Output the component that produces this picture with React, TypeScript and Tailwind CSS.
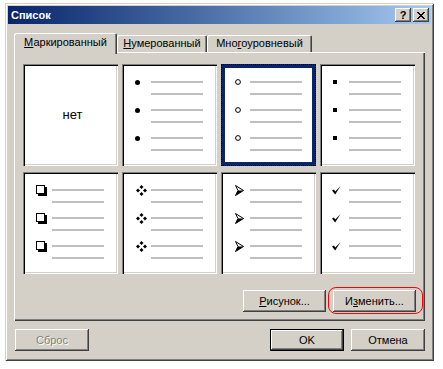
import type { ReactNode } from 'react'

const raised =
    'bg-[#d4d0c8] shadow-[inset_-1px_-1px_#404040,inset_1px_1px_#ffffff,inset_-2px_-2px_#808080,inset_2px_2px_#d4d0c8]'

function Dot() {
    return (
        <svg width="5" height="5" viewBox="0 0 5 5">
            <circle cx="2.5" cy="2.5" r="2.5" fill="#000" />
        </svg>
    )
}

function Ring() {
    return (
        <svg width="6" height="6" viewBox="0 0 6 6">
            <circle cx="3" cy="3" r="2.4" fill="none" stroke="#000" strokeWidth="1" />
        </svg>
    )
}

function Square() {
    return <div className="w-[4px] h-[4px] bg-black" />
}

function Box() {
    return (
        <svg width="11" height="11" viewBox="0 0 11 11" shapeRendering="crispEdges">
            <rect x="0.5" y="0.5" width="8" height="8" fill="#fff" stroke="#000" />
            <rect x="9" y="2" width="2" height="9" fill="#000" />
            <rect x="2" y="9" width="9" height="2" fill="#000" />
        </svg>
    )
}

function Diamonds() {
    const d = (cx: number, cy: number) => `${cx},${cy - 2} ${cx + 2},${cy} ${cx},${cy + 2} ${cx - 2},${cy}`
    return (
        <svg width="11" height="11" viewBox="0 0 11 11">
            <polygon points={d(5.5, 2)} fill="#000" />
            <polygon points={d(2, 5.5)} fill="#000" />
            <polygon points={d(9, 5.5)} fill="#000" />
            <polygon points={d(5.5, 9)} fill="#000" />
        </svg>
    )
}

function Arrow() {
    return (
        <svg width="9" height="11" viewBox="0 0 9 11">
            <path d="M0.5 0.5 L8.5 5.5 L0.5 10.5 L3 5.5 Z" fill="#fff" stroke="#000" strokeWidth="1" />
            <path d="M3 5.5 L8.5 5.5 L0.5 10.5 Z" fill="#000" />
        </svg>
    )
}

function Check() {
    return (
        <svg width="9" height="9" viewBox="0 0 9 9">
            <path d="M0 4.5 L2 3.5 L3.2 5.5 L8.5 0 L3.2 8.5 Z" fill="#000" />
        </svg>
    )
}

type Cell = { bullet?: ReactNode; pad?: string; selected?: boolean }

const cells: Cell[] = [
    {},
    { bullet: <Dot />, pad: 'pl-[13px]' },
    { bullet: <Ring />, pad: 'pl-[14px]', selected: true },
    { bullet: <Square />, pad: 'pl-[13px]' },
    { bullet: <Box />, pad: 'pl-[13px]' },
    { bullet: <Diamonds />, pad: 'pl-[14px]' },
    { bullet: <Arrow />, pad: 'pl-[14px]' },
    { bullet: <Check />, pad: 'pl-[12px]' },
]

function Line() {
    return <div className="w-[52px] h-[2px] bg-[#c0c0c0]" />
}

function BulletCell({ cell }: { cell: Cell }) {
    const frame = cell.selected
        ? 'shadow-[inset_0_0_0_4px_#0a246a] outline-1 outline-dotted outline-black -outline-offset-1'
        : 'shadow-[inset_1px_1px_#808080,inset_2px_2px_#000000,inset_-1px_-1px_#ffffff,inset_-2px_-2px_#d4d0c8]'

    if (!cell.bullet) {
        return (
            <div className={`h-[102px] bg-white flex items-center justify-center text-[13px] pl-[4px] ${frame}`}>
                нет
            </div>
        )
    }

    return (
        <div className={`h-[102px] bg-white pt-[12px] flex flex-col gap-[4px] ${frame}`}>
            {[0, 1, 2].map((i) => (
                <div key={i}>
                    <div className="flex items-center h-[12px]">
                        <div className={`w-[29px] flex items-center ${cell.pad}`}>{cell.bullet}</div>
                        <Line />
                    </div>
                    <div className="flex items-center h-[12px] pl-[29px]">
                        <Line />
                    </div>
                </div>
            ))}
        </div>
    )
}

function Tab({ children, width, active }: { children: ReactNode; width: string; active?: boolean }) {
    return (
        <div
            className={`${width} flex items-center justify-center bg-[#d4d0c8] rounded-t-[2px] shadow-[inset_1px_1px_#ffffff,inset_-1px_0_#404040,inset_-2px_0_#808080] ${
                active ? 'h-[21px] relative z-10 pb-[2px]' : 'h-[17px] mb-[2px]'
            }`}
        >
            {children}
        </div>
    )
}

export default function App() {
    return (
        <div className="bg-white pl-[5px] pt-[3px] font-['Liberation_Sans',Arial,sans-serif] text-[11px] text-black">
            <div className="w-[429px] h-[358px] p-[3px] bg-[#d4d0c8] shadow-[inset_1px_1px_#d4d0c8,inset_-1px_-1px_#404040,inset_2px_2px_#ffffff,inset_-2px_-2px_#808080] flex flex-col">
                {/* title bar */}
                <div className="h-[18px] flex items-center justify-between bg-gradient-to-r from-[#0a246a] to-[#a6caf0] pl-[3px] pr-[2px]">
                    <span className="text-white font-bold text-[11px]">Список</span>
                    <div className="flex gap-[2px]">
                        <div className={`w-[16px] h-[14px] flex items-center justify-center font-bold text-[11px] leading-none ${raised}`}>
                            ?
                        </div>
                        <div className={`w-[16px] h-[14px] flex items-center justify-center ${raised}`}>
                            <svg width="8" height="7" viewBox="0 0 8 7" shapeRendering="crispEdges">
                                <path d="M0 0h2v1h-2zM1 1h2v1h-2zM2 2h4v1h-4zM3 3h2v1h-2zM2 4h4v1h-4zM1 5h2v1h-2zM0 6h2v1h-2zM6 0h2v1h-2zM5 1h2v1h-2zM5 5h2v1h-2zM6 6h2v1h-2z" fill="#000" />
                            </svg>
                        </div>
                    </div>
                </div>

                {/* tabs */}
                <div className="mt-[9px] h-[21px] flex items-end pl-[6px]">
                    <Tab width="w-[103px]" active>
                        <span><u>М</u>аркированный</span>
                    </Tab>
                    <Tab width="w-[90px]">
                        <span><u>Н</u>умерованный</span>
                    </Tab>
                    <Tab width="w-[105px]">
                        <span>Мно<u>г</u>оуровневый</span>
                    </Tab>
                </div>

                <div className="-mt-[2px] mx-[6px] h-[269px] bg-[#d4d0c8] shadow-[inset_1px_1px_#ffffff,inset_-1px_-1px_#404040,inset_-2px_-2px_#808080] pt-[12px] pl-[9px] pr-[9px]">
                    <div className="w-[392px] grid grid-cols-4 gap-x-[4px] gap-y-[6px]">
                        {cells.map((c, i) => (
                            <BulletCell key={i} cell={c} />
                        ))}
                    </div>
                    <div className="mt-[16px] flex justify-end gap-[7px]">
                        <div className={`w-[83px] h-[22px] flex items-center justify-center ${raised}`}>
                            <span><u>Р</u>исунок...</span>
                        </div>
                        <div className="relative">
                            <div className={`w-[83px] h-[22px] flex items-center justify-center ${raised}`}>
                                <span>И<u>з</u>менить...</span>
                            </div>
                            <span className="absolute -left-[5px] -right-[7px] -top-[3px] -bottom-[2px] border border-[#ff0000] rounded-[8px] pointer-events-none" />
                        </div>
                    </div>
                </div>

                {/* bottom buttons */}
                <div className="mt-[8px] flex items-center pl-[7px] pr-[6px]">
                    <div className={`w-[74px] h-[22px] flex items-center justify-center text-[#808080] [text-shadow:1px_1px_#ffffff] ${raised}`}>
                        Сброс
                    </div>
                    <div className="flex-1" />
                    <div className="w-[74px] h-[22px] border border-black flex items-center justify-center bg-[#d4d0c8] shadow-[inset_-1px_-1px_#404040,inset_1px_1px_#ffffff,inset_-2px_-2px_#808080]">
                        OK
                    </div>
                    <div className={`ml-[7px] w-[74px] h-[22px] flex items-center justify-center ${raised}`}>
                        Отмена
                    </div>
                </div>
            </div>
        </div>
    )
}
